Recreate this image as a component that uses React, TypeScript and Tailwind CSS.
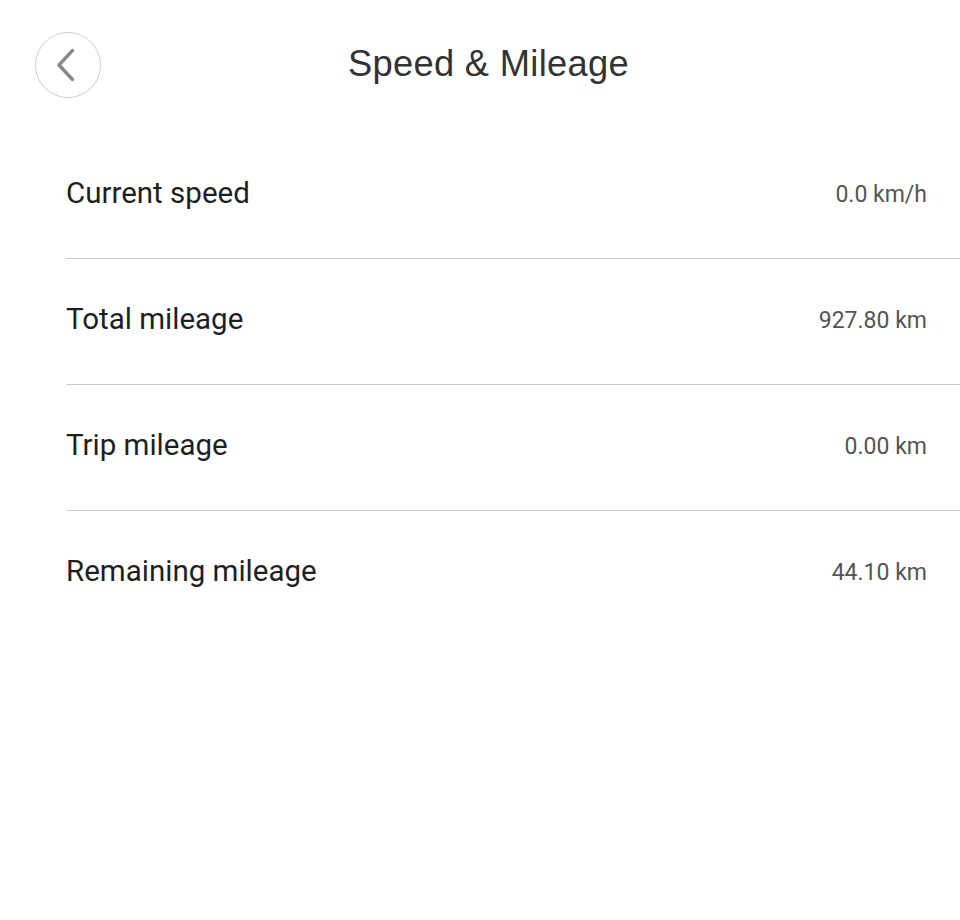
import React from "react";

const rows = [
  { label: "Current speed", value: "0.0 km/h" },
  { label: "Total mileage", value: "927.80 km" },
  { label: "Trip mileage", value: "0.00 km" },
  { label: "Remaining mileage", value: "44.10 km" },
];

export default function App() {
  return (
    <div className="w-[960px] h-[920px] bg-white">
      <div className="relative h-[133px]">
        <button className="absolute left-[35px] top-[32px] w-[66px] h-[66px] rounded-full border border-[#cfcfcf] flex items-center justify-center">
          <svg width="24" height="34" viewBox="0 0 24 34" fill="none">
            <path d="M16.5 2.5 L3 17 L16.5 31.5" stroke="#8a8a8a" strokeWidth="3.4" strokeLinecap="round" strokeLinejoin="round" />
          </svg>
        </button>
        <div className="absolute left-[348px] top-[39px] text-[36.3px] leading-[50px] text-[#333] tracking-[0.3px]" style={{ fontFamily: '"Liberation Sans", Arial, sans-serif' }}>
          Speed &amp; Mileage
        </div>
      </div>
      <div className="pl-[66px]">
        {rows.map((r, i) => (
          <div
            key={r.label}
            className={`h-[126px] pb-[4px] pr-[33px] flex items-center justify-between ${i < rows.length - 1 ? "border-b border-[#cccccc]" : ""}`}
          >
            <span className="text-[29.5px] text-[#1f1f1f] leading-none" style={{ fontFamily: "Roboto, sans-serif" }}>{r.label}</span>
            <span className="text-[23px] text-[#555] leading-none pt-[1px]" style={{ fontFamily: "Roboto, sans-serif" }}>{r.value}</span>
          </div>
        ))}
      </div>
    </div>
  );
}
